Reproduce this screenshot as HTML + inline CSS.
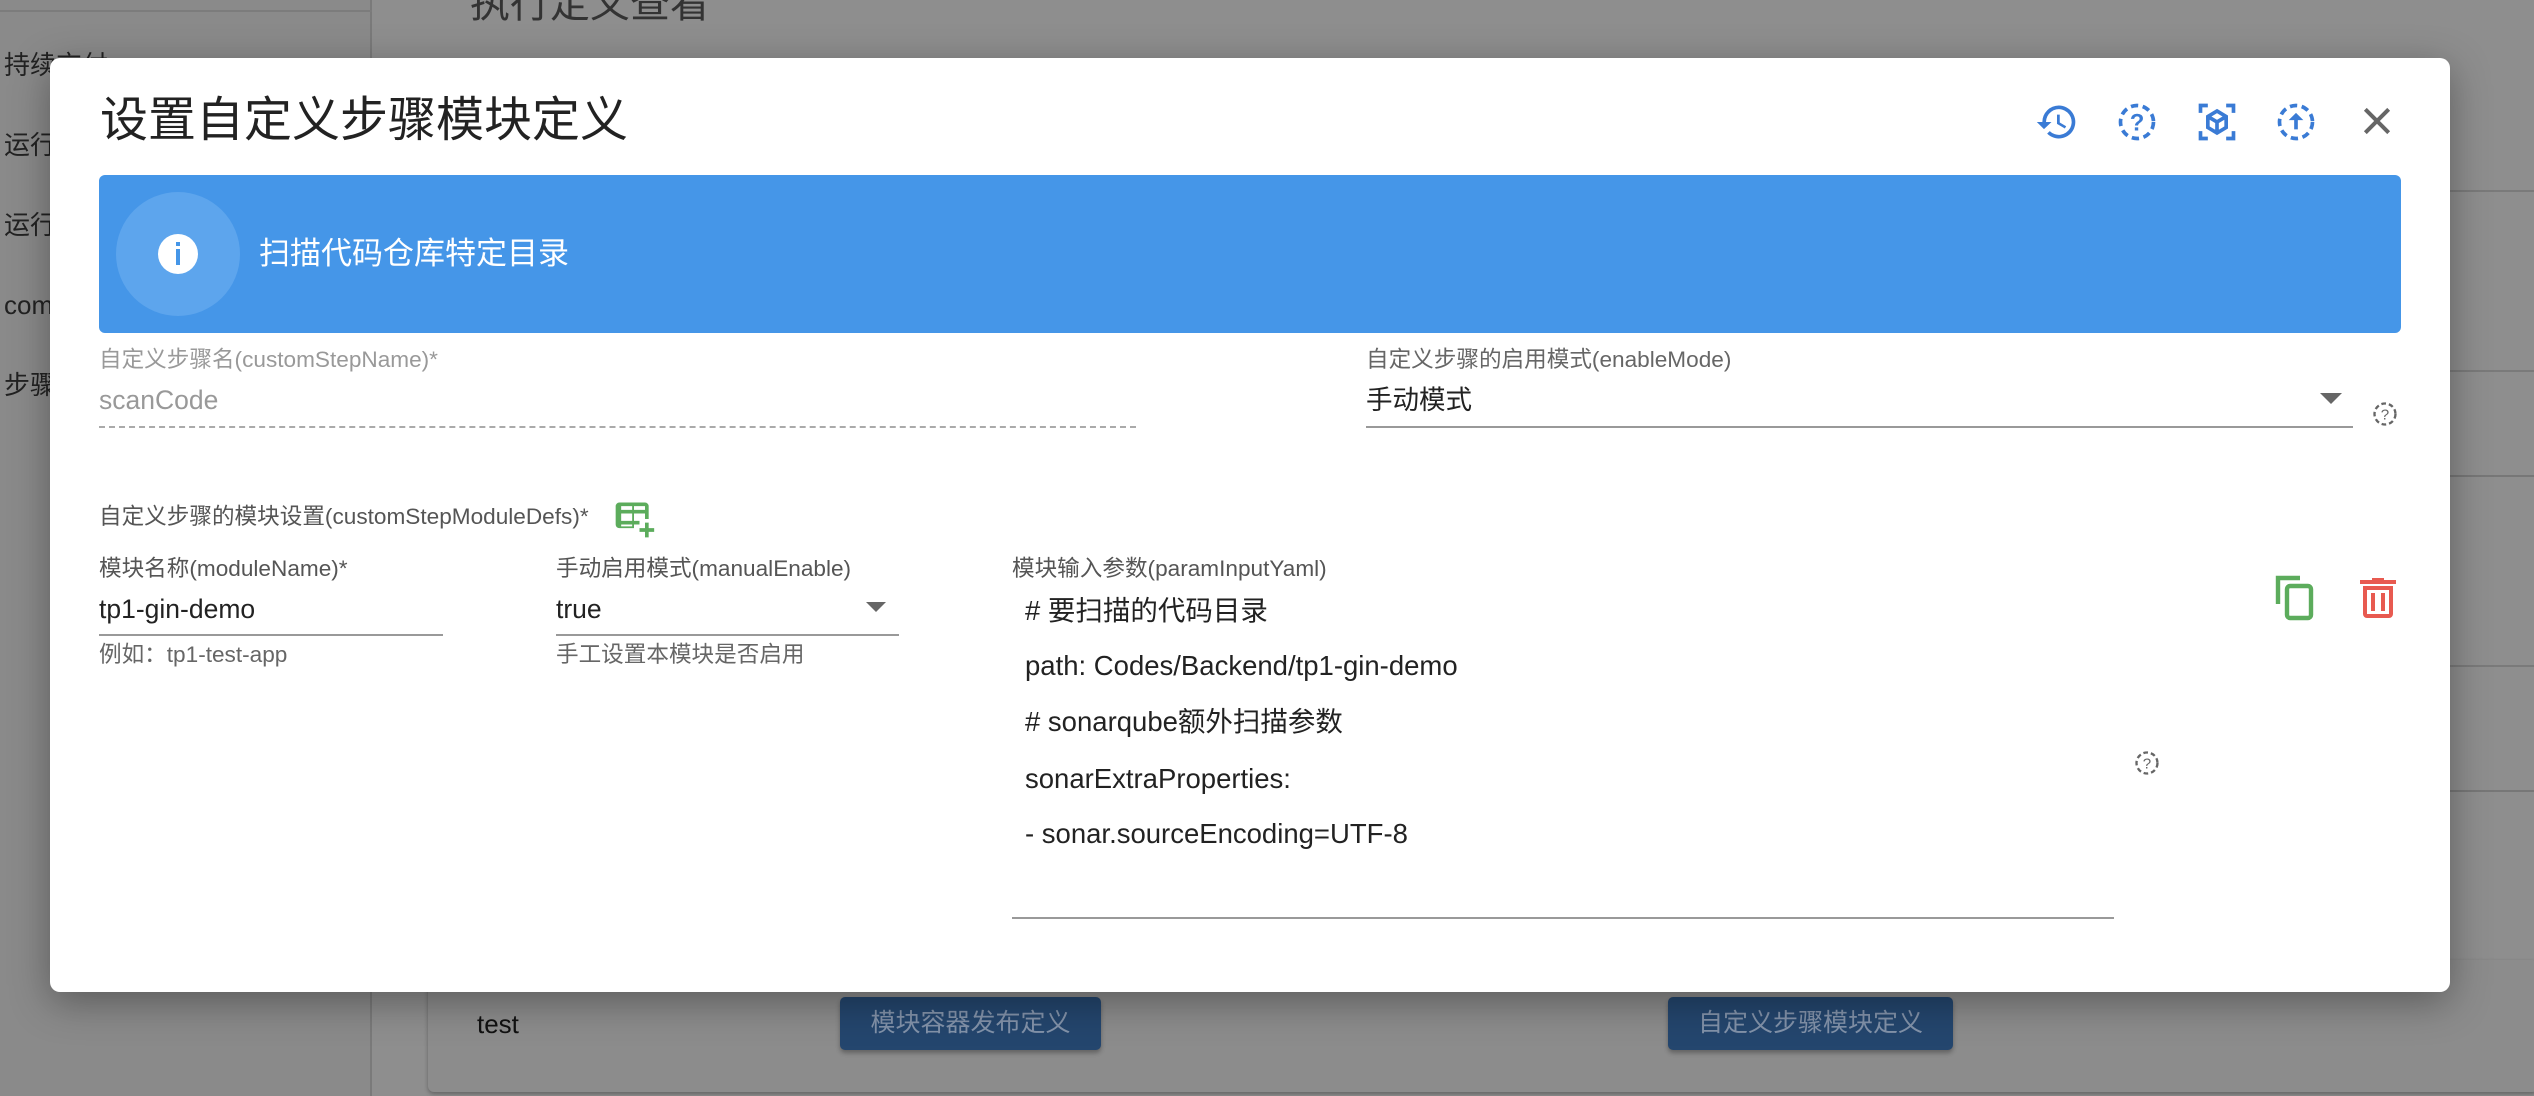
<!DOCTYPE html>
<html><head><meta charset="utf-8"><style>
*{margin:0;padding:0;box-sizing:border-box}
body{width:2534px;height:1096px;overflow:hidden;position:relative;background:#8e8e8e;font-family:"Liberation Sans","Noto Sans CJK SC",sans-serif}
.a{position:absolute;white-space:nowrap;line-height:1.2}
.side{position:absolute;left:0;top:0;width:372px;height:1096px;background:#8a8a8a;border-right:2px solid #7a7a7a}
.side .a{font-size:26px;color:#222;left:4px}
.modal{position:absolute;left:50px;top:58px;width:2400px;height:934px;background:#fff;border-radius:10px;box-shadow:0 10px 40px rgba(0,0,0,.35)}
.lbl{font-size:22.6px;color:#666}
.val{font-size:26.5px;color:#222}
.y{font-size:27.5px;color:#222}
.line{position:absolute;height:2px;background:#999}
.btn{position:absolute;background:#24466e;color:#8393aa;font-size:25px;border-radius:5px;text-align:center;line-height:53px;box-shadow:0 3px 5px rgba(0,0,0,.3)}
</style></head><body>
<div class="side">
<div style="position:absolute;left:0;top:10px;width:372px;height:2px;background:#7c7c7c"></div>
<div class="a" style="top:50px">持续交付</div>
<div class="a" style="top:130px">运行</div>
<div class="a" style="top:210px">运行</div>
<div class="a" style="top:290px">com</div>
<div class="a" style="top:370px">步骤</div>
</div>
<div class="a" style="left:470px;top:-20px;font-size:40px;color:#333">执行定义查看</div>
<div style="position:absolute;left:2450px;top:190px;width:84px;height:2px;background:#7a7a7a"></div>
<div style="position:absolute;left:2450px;top:370px;width:84px;height:2px;background:#7a7a7a"></div>
<div style="position:absolute;left:2450px;top:475px;width:84px;height:2px;background:#777"></div>
<div style="position:absolute;left:2450px;top:665px;width:84px;height:2px;background:#7a7a7a"></div>
<div style="position:absolute;left:2450px;top:790px;width:84px;height:2px;background:#777"></div>
<div style="position:absolute;left:428px;top:960px;width:2110px;height:132px;background:#8c8c8c;border-radius:6px;box-shadow:0 2px 4px rgba(0,0,0,.3)"></div>
<div class="a" style="left:477px;top:1009px;font-size:26px;color:#111">test</div>
<div class="btn" style="left:840px;top:997px;width:261px">模块容器发布定义</div>
<div class="btn" style="left:1668px;top:997px;width:285px">自定义步骤模块定义</div>

<div class="modal"></div>
<div class="a" style="left:100px;top:92px;font-size:48px;color:#222">设置自定义步骤模块定义</div>
<svg style="position:absolute;left:2035px;top:100px" width="44" height="44" viewBox="0 0 24 24"><path fill="#3a7bd5" d="M13 3a9 9 0 0 0-9 9H1l3.9 3.9L9 12H6a7 7 0 1 1 2.050 4.95l-1.42 1.42A9 9 0 1 0 13 3zm-1 5v5l4.28 2.54.72-1.21-3.5-2.08V8H12z"/></svg>
<svg style="position:absolute;left:2115px;top:100px" width="44" height="44" viewBox="0 0 24 24"><circle cx="12" cy="12" r="9" fill="none" stroke="#3a7bd5" stroke-width="2" stroke-dasharray="4 2.5"/><text x="12" y="16.5" font-size="13" font-weight="bold" fill="#3a7bd5" text-anchor="middle" font-family="Liberation Sans">?</text></svg>
<svg style="position:absolute;left:2195px;top:100px" width="44" height="44" viewBox="0 0 24 24"><path fill="none" stroke="#3a7bd5" stroke-width="2" d="M3 7V3h4M17 3h4v4M21 17v4h-4M7 21H3v-4M12 6l5 3v6l-5 3-5-3V9zM7 9l5 3 5-3M12 12v6"/></svg>
<svg style="position:absolute;left:2274px;top:100px" width="44" height="44" viewBox="0 0 24 24"><circle cx="12" cy="12" r="9" fill="none" stroke="#3a7bd5" stroke-width="2" stroke-dasharray="4 2.5"/><path fill="#3a7bd5" d="M12 7l-4 4h3v5h2v-5h3z"/></svg>
<svg style="position:absolute;left:2357px;top:101px" width="40" height="40" viewBox="0 0 24 24"><path stroke="#666" stroke-width="2.4" d="M5 5l14 14M19 5L5 19"/></svg>

<div style="position:absolute;left:99px;top:175px;width:2302px;height:158px;background:#4596e8;border-radius:6px"></div>
<div style="position:absolute;left:116px;top:192px;width:124px;height:124px;border-radius:50%;background:#5da5ed"></div>
<div style="position:absolute;left:158px;top:234px;width:40px;height:40px;border-radius:50%;background:#fff"></div>
<div style="position:absolute;left:176px;top:242px;width:4px;height:4px;background:#4596e8"></div>
<div style="position:absolute;left:176px;top:249px;width:4px;height:16px;background:#4596e8"></div>
<div class="a" style="left:259px;top:235px;font-size:31px;color:#fff">扫描代码仓库特定目录</div>

<div class="a lbl" style="left:99px;top:346px;color:#999">自定义步骤名(customStepName)*</div>
<div class="a val" style="left:99px;top:385px;color:#999">scanCode</div>
<div style="position:absolute;left:99px;top:426px;width:1037px;border-top:2px dashed #aaa"></div>

<div class="a lbl" style="left:1366px;top:346px">自定义步骤的启用模式(enableMode)</div>
<div class="a val" style="left:1366px;top:385px">手动模式</div>
<div class="line" style="left:1366px;top:426px;width:987px"></div>
<div style="position:absolute;left:2320px;top:393px;border-left:11px solid transparent;border-right:11px solid transparent;border-top:11px solid #666"></div>
<svg style="position:absolute;left:2371px;top:400px" width="28" height="28" viewBox="0 0 24 24"><circle cx="12" cy="12" r="9" fill="none" stroke="#666" stroke-width="2" stroke-dasharray="4 2.5"/><text x="12" y="16.5" font-size="13" fill="#666" text-anchor="middle" font-family="Liberation Sans">?</text></svg>

<div class="a lbl" style="left:99px;top:503px;color:#555">自定义步骤的模块设置(customStepModuleDefs)*</div>
<svg style="position:absolute;left:612px;top:497px" width="44" height="44" viewBox="0 0 24 24"><path fill="#5cac5c" d="M4 3h14a2 2 0 0 1 2 2v7h-2V9h-6v4h3v2h-3v2h-1V9H5v4h6v2H5v1h6v1H4a2 2 0 0 1-2-2V5a2 2 0 0 1 2-2zm1 2v2h6V5zm7 0v2h6V5zM18 14h2v3h3v2h-3v3h-2v-3h-3v-2h3z"/></svg>

<div class="a lbl" style="left:99px;top:555px;color:#555">模块名称(moduleName)*</div>
<div class="a val" style="left:99px;top:594px">tp1-gin-demo</div>
<div class="line" style="left:99px;top:634px;width:344px"></div>
<div class="a lbl" style="left:99px;top:641px">例如：tp1-test-app</div>

<div class="a lbl" style="left:556px;top:555px;color:#555">手动启用模式(manualEnable)</div>
<div class="a val" style="left:556px;top:594px">true</div>
<div class="line" style="left:556px;top:634px;width:343px"></div>
<div style="position:absolute;left:866px;top:602px;border-left:10px solid transparent;border-right:10px solid transparent;border-top:10px solid #666"></div>
<div class="a lbl" style="left:556px;top:641px">手工设置本模块是否启用</div>

<div class="a lbl" style="left:1012px;top:555px;color:#555">模块输入参数(paramInputYaml)</div>
<div class="a y" style="left:1025px;top:594px">#&nbsp;要扫描的代码目录</div>
<div class="a y" style="left:1025px;top:649px">path: Codes/Backend/tp1-gin-demo</div>
<div class="a y" style="left:1025px;top:705px"># sonarqube额外扫描参数</div>
<div class="a y" style="left:1025px;top:762px">sonarExtraProperties:</div>
<div class="a y" style="left:1025px;top:817px">- sonar.sourceEncoding=UTF-8</div>
<div class="line" style="left:1012px;top:917px;width:1102px"></div>
<svg style="position:absolute;left:2133px;top:749px" width="28" height="28" viewBox="0 0 24 24"><circle cx="12" cy="12" r="9" fill="none" stroke="#666" stroke-width="2" stroke-dasharray="4 2.5"/><text x="12" y="16.5" font-size="13" fill="#666" text-anchor="middle" font-family="Liberation Sans">?</text></svg>

<svg style="position:absolute;left:2274px;top:574px" width="46" height="48" viewBox="0 0 23 24"><path fill="none" stroke="#5cac5c" stroke-width="2.2" d="M2 15V2h11"/><rect x="6.5" y="6" width="12" height="16" rx="1.5" fill="none" stroke="#5cac5c" stroke-width="2.2"/></svg>
<svg style="position:absolute;left:2360px;top:578px" width="36" height="40" viewBox="0 0 18 20"><path fill="#e85a50" d="M6 0h6v1h6v2H0V1h6zM1.5 4h15v14a2 2 0 0 1-2 2h-11a2 2 0 0 1-2-2zm2 2v12h11V6zm2 1.5h2v9h-2zm5 0h2v9h-2z"/></svg>
</body></html>
